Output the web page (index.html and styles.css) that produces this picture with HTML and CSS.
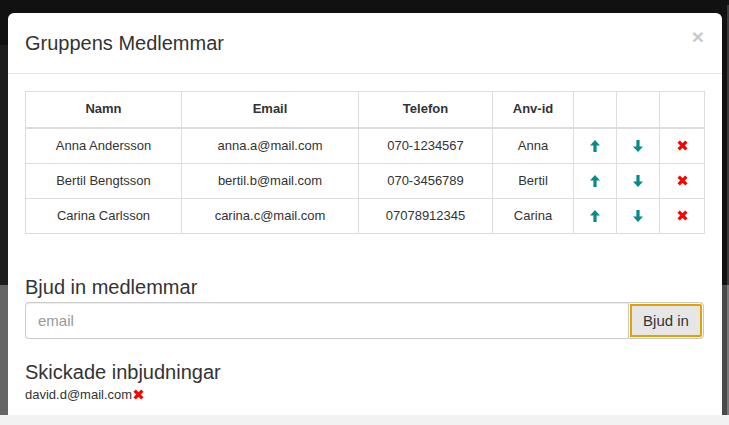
FILE: index.html
```html
<!DOCTYPE html>
<html lang="sv">
<head>
<meta charset="utf-8">
<title>Gruppens Medlemmar</title>
<link rel="stylesheet" href="styles.css">
</head>
<body>
<div class="screen">
  <div class="gutter gutter-left"></div>
  <div class="modal">
    <div class="modal-header">
      <h4 class="modal-title">Gruppens Medlemmar</h4>
      <button class="close" type="button">×</button>
    </div>
    <div class="modal-body">
      <table class="members">
        <colgroup>
          <col class="c-name"><col class="c-email"><col class="c-phone"><col class="c-id"><col class="c-icon"><col class="c-icon"><col class="c-last">
        </colgroup>
        <thead>
          <tr><th>Namn</th><th>Email</th><th>Telefon</th><th>Anv-id</th><th></th><th></th><th></th></tr>
        </thead>
        <tbody>
          <tr>
            <td>Anna Andersson</td><td>anna.a@mail.com</td><td>070-1234567</td><td>Anna</td>
            <td><svg class="ico" viewBox="0 0 10 12"><path d="M5 0 L10 5.5 L6.6 5.5 L6.6 12 L3.4 12 L3.4 5.5 L0 5.5 Z"/></svg></td>
            <td><svg class="ico" viewBox="0 0 10 12"><path d="M5 12 L10 6.5 L6.6 6.5 L6.6 0 L3.4 0 L3.4 6.5 L0 6.5 Z"/></svg></td>
            <td><svg class="ico-x" viewBox="0 0 10 10"><path d="M1.5 1.5 L8.5 8.5 M8.5 1.5 L1.5 8.5"/></svg></td>
          </tr>
          <tr>
            <td>Bertil Bengtsson</td><td>bertil.b@mail.com</td><td>070-3456789</td><td>Bertil</td>
            <td><svg class="ico" viewBox="0 0 10 12"><path d="M5 0 L10 5.5 L6.6 5.5 L6.6 12 L3.4 12 L3.4 5.5 L0 5.5 Z"/></svg></td>
            <td><svg class="ico" viewBox="0 0 10 12"><path d="M5 12 L10 6.5 L6.6 6.5 L6.6 0 L3.4 0 L3.4 6.5 L0 6.5 Z"/></svg></td>
            <td><svg class="ico-x" viewBox="0 0 10 10"><path d="M1.5 1.5 L8.5 8.5 M8.5 1.5 L1.5 8.5"/></svg></td>
          </tr>
          <tr>
            <td>Carina Carlsson</td><td>carina.c@mail.com</td><td>07078912345</td><td>Carina</td>
            <td><svg class="ico" viewBox="0 0 10 12"><path d="M5 0 L10 5.5 L6.6 5.5 L6.6 12 L3.4 12 L3.4 5.5 L0 5.5 Z"/></svg></td>
            <td><svg class="ico" viewBox="0 0 10 12"><path d="M5 12 L10 6.5 L6.6 6.5 L6.6 0 L3.4 0 L3.4 6.5 L0 6.5 Z"/></svg></td>
            <td><svg class="ico-x" viewBox="0 0 10 10"><path d="M1.5 1.5 L8.5 8.5 M8.5 1.5 L1.5 8.5"/></svg></td>
          </tr>
        </tbody>
      </table>

      <h3 class="section-title invite-title">Bjud in medlemmar</h3>
      <div class="input-group">
        <input class="email-input" type="text" placeholder="email">
        <button class="invite-btn" type="button">Bjud in</button>
      </div>

      <h3 class="section-title sent-title">Skickade inbjudningar</h3>
      <div class="sent-item">david.d@mail.com<svg class="ico-x small" viewBox="0 0 10 10"><path d="M1.5 1.5 L8.5 8.5 M8.5 1.5 L1.5 8.5"/></svg></div>
    </div>
  </div>
  <div class="gutter gutter-right"><div class="track"></div></div>
</div>
<div class="footer-strip"></div>
</body>
</html>
```

FILE: styles.css
```css
* { box-sizing: border-box; }

html, body {
  margin: 0;
  padding: 0;
}

body {
  width: 729px;
  height: 425px;
  overflow: hidden;
  font-family: "Liberation Sans", Arial, sans-serif;
  color: #333;
  background: #f2f2f2;
}

.screen {
  display: flex;
  height: 415px;
  background: linear-gradient(to bottom, #111 0 45px, #1d1d1d 45px 285px, #656565 285px 415px);
  overflow: hidden;
}

.gutter {
  flex: 0 0 8px;
}

.gutter-right {
  display: flex;
  justify-content: flex-end;
  background: linear-gradient(to bottom, #121212 0 285px, #4a4a4a 285px);
}

.track {
  width: 3px;
  margin-top: 5px;
  background: linear-gradient(to bottom, #3c3c3c 0 280px, #7a7a7a 280px);
}

.modal {
  flex: 0 0 713px;
  margin-top: 13px;
  background: #fff;
  border-radius: 6px 6px 0 0;
  display: flex;
  flex-direction: column;
}

.modal-header {
  display: flex;
  align-items: center;
  justify-content: space-between;
  padding: 15px 17px 15px 17px;
  border-bottom: 1px solid #e5e5e5;
}

.modal-title {
  margin: 0;
  font-size: 20px;
  line-height: 30px;
  font-weight: normal;
  color: #333;
}

.close {
  border: 0;
  background: none;
  padding: 0;
  margin: -13px 1px 0 0;
  font-family: "Liberation Sans", Arial, sans-serif;
  font-size: 21px;
  font-weight: bold;
  line-height: 1;
  color: #c9c9c9;
}

.modal-body {
  padding: 17px 17px 0 17px;
}

.members {
  width: 679px;
  table-layout: fixed;
  border-collapse: collapse;
  margin-bottom: 20px;
  font-size: 13px;
}

.c-name { width: 156px; }
.c-email { width: 177px; }
.c-phone { width: 134px; }
.c-id { width: 81px; }
.c-icon { width: 43px; }
.c-last { width: 45px; }

.members th,
.members td {
  border: 1px solid #ddd;
  padding: 8px;
  line-height: 18px;
  text-align: center;
  vertical-align: middle;
}

.members th {
  font-weight: bold;
  border-bottom-width: 2px;
  height: 36px;
}

.members td {
  height: 35px;
}

.ico {
  display: block;
  margin: 0 auto;
  width: 10px;
  height: 12px;
  fill: #078a8a;
}

.ico-x {
  display: block;
  margin: 0 auto;
  width: 11px;
  height: 11px;
  stroke: #ff0000;
  stroke-width: 3;
  fill: none;
}

.section-title {
  margin: 0;
  font-size: 20px;
  line-height: 28px;
  font-weight: normal;
  color: #333;
}

.invite-title {
  margin-top: 39px;
  margin-bottom: 1px;
}

.sent-title {
  margin-top: 19px;
}

.input-group {
  display: flex;
  width: 679px;
  height: 37px;
}

.email-input {
  flex: 1 1 auto;
  min-width: 0;
  height: 37px;
  padding: 6px 12px;
  border: 1px solid #ccc;
  border-right: 0;
  border-radius: 4px 0 0 4px;
  box-shadow: inset 0 1px 1px rgba(0,0,0,.075);
  font-family: "Liberation Sans", Arial, sans-serif;
  font-size: 15px;
  color: #555;
  outline: none;
}

.email-input::placeholder {
  color: #999;
}

.invite-btn {
  flex: 0 0 76px;
  height: 37px;
  padding: 0;
  border: 1px solid #c8c8c8;
  border-radius: 0 4px 4px 0;
  background: #e6e6e6;
  box-shadow: inset 0 0 0 1px #fff, inset 0 0 0 3px #e8a000;
  font-family: "Liberation Sans", Arial, sans-serif;
  font-size: 15px;
  color: #333;
}

.sent-item {
  display: flex;
  align-items: center;
  font-size: 13px;
  line-height: 18px;
  color: #333;
}

.ico-x.small {
  display: inline-block;
  margin: 0 0 0 1px;
  width: 11px;
  height: 11px;
}

.footer-strip {
  height: 10px;
  background: #f2f2f2;
}
```
